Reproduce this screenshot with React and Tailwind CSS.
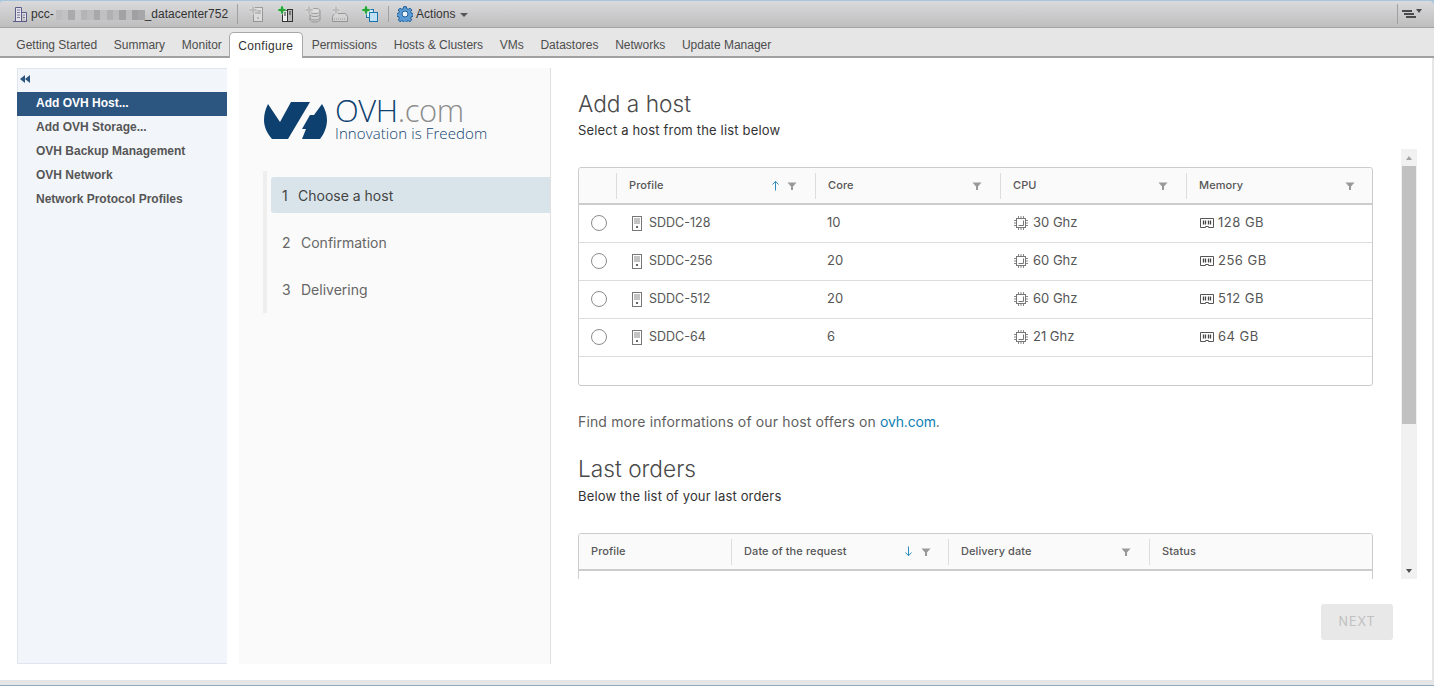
import React from 'react';

const tabs = ['Getting Started', 'Summary', 'Monitor', 'Configure', 'Permissions', 'Hosts & Clusters', 'VMs', 'Datastores', 'Networks', 'Update Manager'];
const sideItems = ['Add OVH Storage...', 'OVH Backup Management', 'OVH Network', 'Network Protocol Profiles'];
const hosts = [
    { name: 'SDDC-128', core: '10', cpu: '30 Ghz', mem: '128 GB' },
    { name: 'SDDC-256', core: '20', cpu: '60 Ghz', mem: '256 GB' },
    { name: 'SDDC-512', core: '20', cpu: '60 Ghz', mem: '512 GB' },
    { name: 'SDDC-64', core: '6', cpu: '21 Ghz', mem: '64 GB' },
];
const blurs = ['bg-[#bdbdbf]', 'bg-[#c2c2c4]', 'bg-[#aaaaac]', 'bg-[#c6c6c8]', 'bg-[#b4b4b6]', 'bg-[#bcbcbe]', 'bg-[#a8a8aa]', 'bg-[#c0c0c2]', 'bg-[#b0b0b2]', 'bg-[#bcbcbe]', 'bg-[#a2a2a4]', 'bg-[#bebec0]', 'bg-[#a0a0a2]', 'bg-[#a6a6a8]'];

const FilterIcon = () => (
    <svg width="10" height="10" viewBox="0 0 10 10" className="shrink-0">
        <path d="M0.5 1.5h9L6 5.5V9H4V5.500z" fill="#999" />
    </svg>
);

const SortArrow = ({ down }) => (
    <svg width="9" height="11" viewBox="0 0 9 11" className="shrink-0">
        <path d={down ? 'M4.5 0.5v9M1.5 6.5l3 3.2 3-3.2' : 'M4.5 10.5v-9M1.5 4.5l3-3.2 3 3.2'} fill="none" stroke="#2e8bc0" strokeWidth="1" />
    </svg>
);

const ServerIcon = () => (
    <svg width="10" height="15" viewBox="0 0 10 15" className="shrink-0">
        <rect x="0.5" y="0.5" width="9" height="14" fill="#fff" stroke="#777" />
        <path d="M2 3h6M2 5h6M2 7h6" stroke="#888" />
        <rect x="4" y="10" width="2" height="2" fill="#666" />
    </svg>
);

const CpuIcon = () => (
    <svg width="14" height="14" viewBox="0 0 14 14" className="shrink-0">
        <rect x="2.5" y="2.5" width="9" height="9" fill="none" stroke="#777" />
        <path d="M9.5 4.5v5h-5" fill="none" stroke="#777" />
        <path d="M0 4.5h2M0 7h2M0 9.5h2M12 4.5h2M12 7h2M12 9.5h2M4.5 0v2M7 0v2M9.5 0v2M4.5 12v2M7 12v2M9.500 12v2" stroke="#888" />
    </svg>
);

const MemIcon = () => (
    <svg width="14" height="11" viewBox="0 0 14 11" className="shrink-0">
        <path d="M0.5 0.5h13v9h-5v-1h-3v1h-5z" fill="none" stroke="#555" />
        <path d="M3.5 2.500v4M5.5 2.500v4M8.5 2.500v4M10.5 2.500v4" stroke="#444" strokeWidth="1.3" />
    </svg>
);

const Plus = ({ x = 0, y = 0, color = '#27a338' }) => (
    <path d={`M${x + 2.5} ${y}h3v2.5h2.5v3h-2.5v2.5h-3v-2.5h-2.5v-3h2.5z`} fill={color} stroke="#fff" strokeWidth="0.5" />
);

const ToolbarIcons = () => (
    <div className="flex items-center">
        <svg width="16" height="17" viewBox="0 0 16 17" className="ml-[11px] opacity-50">
            <rect x="4.5" y="1.5" width="9" height="14" fill="#eee" stroke="#666" />
            <path d="M6 5h6M6 7h6M8 12h2" stroke="#666" />
            <Plus color="#aaa" />
        </svg>
        <svg width="16" height="17" viewBox="0 0 16 17" className="ml-[13px]">
            <rect x="9.5" y="3.5" width="5" height="12" fill="#bbb" stroke="#333" />
            <rect x="4.5" y="4.5" width="5" height="11" fill="#eee" stroke="#333" />
            <path d="M6 7h2M6 9h2M11 6h2M11 8h2" stroke="#333" />
            <Plus />
        </svg>
        <svg width="16" height="17" viewBox="0 0 16 17" className="ml-[11px] opacity-50">
            <path d="M5 5v9c0 1 2 2 5 2s5-1 5-2V5z" fill="#ddd" stroke="#666" />
            <ellipse cx="10" cy="5" rx="5" ry="2.500" fill="#eee" stroke="#666" />
            <path d="M5 8.5c0 1 2 2 5 2s5-1 5-2M5 12c0 1 2 2 5 2s5-1 5-2" fill="none" stroke="#666" />
            <Plus color="#aaa" />
        </svg>
        <svg width="16" height="17" viewBox="0 0 16 17" className="ml-[11px] opacity-50">
            <path d="M0.5 10.5l2-3h11l2 3v5h-15z" fill="#ddd" stroke="#666" />
            <path d="M2 13h12" stroke="#666" strokeDasharray="1 1" />
            <Plus color="#aaa" />
        </svg>
        <svg width="16" height="17" viewBox="0 0 16 17" className="ml-[14px]">
            <rect x="4.5" y="3.5" width="7" height="8" fill="#d6ebf8" stroke="#1b75ad" />
            <rect x="7.5" y="6.5" width="8" height="9" fill="#bfe0f5" stroke="#1b75ad" />
            <Plus />
        </svg>
    </div>
);

const GearIcon = () => (
    <svg width="16" height="16" viewBox="0 0 24 24" className="shrink-0">
        <path d="M10 1h4l.6 3 2.2.9 2.6-1.7 2.8 2.8-1.7 2.6.9 2.2 3 .6v4l-3 .6-.9 2.2 1.7 2.6-2.8 2.8-2.6-1.7-2.2.9-.6 3h-4l-.6-3-2.2-.9-2.6 1.7-2.8-2.8 1.7-2.6-.9-2.2-3-.6v-4l3-.6.9-2.2-1.7-2.6 2.8-2.8 2.6 1.7 2.2-.9z" fill="#5b9bd5" stroke="#1d5c96" strokeWidth="1.5" />
        <circle cx="12" cy="12" r="4.5" fill="#eaf3fb" stroke="#1d5c96" strokeWidth="1.5" />
    </svg>
);

const OvhMark = () => (
    <svg width="63" height="37" viewBox="0 0 63 37" className="shrink-0">
        <path d="M4 2L16 20L27 0H46L24 37H8C3 31 0 25 0 18C0 12 1.500 7 4 2Z" fill="#0d3f6f" />
        <path d="M58 2C61 7 63 12 63 18C63 25 60 32 56 37H38L42 27H38L46 13H50Z" fill="#0d3f6f" />
    </svg>
);

const HeadCell = ({ label, children, first, tight }) => (
    <div className={`flex items-center h-[26px] pl-3 text-[11px] font-medium tracking-[0.1px] text-[#565656] ${tight ? 'pr-[17px]' : 'pr-[18px]'} ${first ? '' : 'border-l border-[#dddddd]'}`}>
        <span className="flex-1">{label}</span>
        {children}
    </div>
);

const App = () => {
    return (
        <div className="w-[1434px] h-[686px] overflow-hidden flex flex-col bg-[#a9c6df] font-['Liberation_Sans',sans-serif]">
            <div className="h-[27px] mt-px shrink-0 flex items-center rounded-tr-[5px] rounded-tl-[3px] border-b border-[#a3a3a3] bg-gradient-to-b from-[#dadadc] to-[#bebebf] text-[12px] text-[#333333]">
                <svg width="16" height="17" viewBox="0 0 16 17" className="ml-3 shrink-0">
                    <path d="M3.500 15.500V1.500h6v14M9.500 6.500h5v9M1 15.500h14" fill="#e2e2ea" stroke="#5c5c88" />
                    <path d="M5 4h3M5 6.500h3M5 9h3M5 11.500h3M11 9h2M11 11.500h2" stroke="#777799" />
                </svg>
                <span className="ml-[3px]">pcc-</span>
                <div className="flex items-center ml-[2px] w-[89px] h-[10px] mt-px blur-[0.7px]">
                    {blurs.map((c, i) => (
                        <div key={i} className={`h-[10px] flex-1 ${c}`} />
                    ))}
                </div>
                <span>_datacenter752</span>
                <div className="w-px h-[20px] bg-[#a0a0a0] ml-[9px]" />
                <ToolbarIcons />
                <div className="w-px h-[16px] bg-[#a0a0a0] ml-[10px]" />
                <div className="ml-[8px]"><GearIcon /></div>
                <span className="ml-[3px]">Actions</span>
                <span className="ml-[5px] mt-px w-0 h-0 border-x-4 border-t-4 border-x-transparent border-t-[#555555]" />
                <div className="ml-auto flex items-center mr-[12px]">
                    <div className="w-px h-[20px] bg-[#a0a0a0] mr-[4px]" />
                    <div className="flex flex-col gap-px w-[14px]">
                        <div className="h-[2px] w-[10px] bg-[#4a4a4a]" />
                        <div className="h-[2px] w-[10px] ml-[2px] bg-[#4a4a4a]" />
                        <div className="h-[2px] w-[10px] ml-[4px] bg-[#4a4a4a]" />
                    </div>
                    <span className="mb-[7px] w-0 h-0 border-x-[3.5px] border-t-4 border-x-transparent border-t-[#4a4a4a]" />
                </div>
            </div>

            <div className="h-[30px] shrink-0 flex items-end pl-2 bg-[#e6e6e6] border-b-2 border-[#a0a0a0] text-[12px] text-[#4d4d4d]">
                {tabs.map((t) => (
                    t === 'Configure' ? (
                        <div key={t} className="h-[26px] -mb-[2px] -ml-px pl-[8px] pr-[9px] flex items-center rounded-t-[5px] bg-white border border-b-0 border-[#a8a8a8] text-[#333333] tracking-[0.35px]">{t}</div>
                    ) : (
                        <div key={t} className="h-[22px] px-[8.35px] flex items-center">{t}</div>
                    )
                ))}
            </div>

            <div className="flex-1 flex min-h-0 bg-[#e6e6e6]">
                <div className="w-[1432px] h-[622px] flex bg-white pt-[10px] pl-[17px]">
                    <div className="w-[210px] h-[596px] shrink-0 bg-[#f2f5fa] border border-[#dfe6f0] border-r-0 text-[12px] font-bold text-[#565656]">
                        <div className="h-[23px] pl-px pt-[5px] flex">
                            <svg width="12" height="10" viewBox="0 0 12 10">
                                <path d="M6 1v8L1 5zM11 1v8L6 5z" fill="#2c5680" />
                            </svg>
                        </div>
                        <div className="-ml-px h-[24px] pl-[19px] pb-[2px] flex items-center bg-[#2c5680] text-[#ffffff]">Add OVH Host...</div>
                        {sideItems.map((s) => (
                            <div key={s} className="h-[24px] pl-[18px] pb-[2px] flex items-center">{s}</div>
                        ))}
                    </div>

                    <div className="w-[312px] h-[596px] ml-[12px] shrink-0 bg-[#fafafa] border-r border-[#e0e0e0]">
                        <div className="h-[103px] pl-[25px] pt-[34px] flex items-start">
                            <OvhMark />
                            <div className="ml-[8px] -mt-[7px] font-['Open_Sans',sans-serif] font-light">
                                <div className="text-[31px] leading-[31px] -mb-[1px] tracking-[-0.4px] text-[#0d3f6f]">OVH<span className="text-[#8c8c8c]">.com</span></div>
                                <div className="text-[15px] leading-[17px] tracking-[0.1px] text-[#0f4372]">Innovation is Freedom</div>
                            </div>
                        </div>
                        <div className="ml-[24px] pl-[4px] border-l-4 border-[#eeeeee] h-[142px] pt-[6px] font-['Inter',sans-serif] text-[14px] text-[#666666]">
                            <div className="h-[36px] flex items-center pl-[11px] rounded-l-[3px] bg-[#d9e4ea] text-[#444444]">
                                <span className="w-[16px]">1</span>Choose a host
                            </div>
                            <div className="h-[36px] mt-[11px] flex items-center pl-[11px]">
                                <span className="w-[19px]">2</span>Confirmation
                            </div>
                            <div className="h-[36px] mt-[11px] flex items-center pl-[11px]">
                                <span className="w-[19px]">3</span>Delivering
                            </div>
                        </div>
                    </div>

                    <div className="flex-1 min-w-0 pl-[27px] font-['Inter',sans-serif] text-[#565656] relative">
                        <div className="h-[81px] pt-[24px]">
                            <h1 className="text-[22.7px] leading-[24px] font-light text-[#4a4a4a]">Add a host</h1>
                            <p className="mt-[6px] text-[13px] leading-[16px] tracking-[0.17px] text-[#333333]">Select a host from the list below</p>
                        </div>
                        <div className="flex h-[430px]">
                            <div className="w-[795px] shrink-0 overflow-hidden pt-[18px]">
                                <div className="h-[219px] border border-[#cccccc] rounded-[3px]">
                                    <div className="h-[37px] border-b-2 border-[#cccccc] bg-[#fafafa] grid grid-cols-[37px_199px_185px_186px_1fr] items-center rounded-t-[3px]">
                                        <div />
                                        <HeadCell label="Profile">
                                            <SortArrow />
                                            <span className="w-[7px]" />
                                            <FilterIcon />
                                        </HeadCell>
                                        <HeadCell label="Core"><FilterIcon /></HeadCell>
                                        <HeadCell label="CPU"><FilterIcon /></HeadCell>
                                        <HeadCell label="Memory" tight><FilterIcon /></HeadCell>
                                    </div>
                                    {hosts.map((h) => (
                                        <div key={h.name} className="h-[38px] pb-px grid grid-cols-[38px_198px_185px_186px_1fr] items-center border-b border-[#dddddd] text-[13px]">
                                            <div className="flex justify-center pl-[2px]">
                                                <div className="w-4 h-4 rounded-full border border-[#8c8c8c] bg-white" />
                                            </div>
                                            <div className="flex items-center gap-[7px] pl-[15px]"><ServerIcon /><span className="text-[12.5px]">{h.name}</span></div>
                                            <div className="pl-3">{h.core}</div>
                                            <div className="flex items-center gap-[5px] pl-[14px]"><CpuIcon /><span>{h.cpu}</span></div>
                                            <div className="flex items-center gap-[4px] pl-[14px]"><MemIcon /><span className="tracking-[0.5px]">{h.mem}</span></div>
                                        </div>
                                    ))}
                                </div>
                                <p className="mt-[26px] text-[14px] leading-[20px] tracking-[0.14px] text-[#5f5f5f]">Find more informations of our host offers on <span className="tracking-[-0.2px] text-[#0f7fb5]">ovh.com</span>.</p>
                                <h2 className="mt-[23px] text-[22.7px] leading-[28px] font-light text-[#4a4a4a]">Last orders</h2>
                                <p className="mt-[5px] text-[13px] leading-[16px] tracking-[0.17px] text-[#333333]">Below the list of your last orders</p>
                                <div className="mt-[29px] border border-[#cccccc] rounded-[3px]">
                                    <div className="h-[37px] border-b-2 border-[#cccccc] bg-[#fafafa] grid grid-cols-[152px_217px_201px_1fr] items-center rounded-t-[3px]">
                                        <HeadCell label="Profile" first />
                                        <HeadCell label="Date of the request" tight>
                                            <SortArrow down />
                                            <span className="w-[8px]" />
                                            <FilterIcon />
                                        </HeadCell>
                                        <HeadCell label="Delivery date"><FilterIcon /></HeadCell>
                                        <HeadCell label="Status" />
                                    </div>
                                    <div className="h-[20px]" />
                                </div>
                            </div>
                            <div className="ml-[28px] w-[16px] h-[430px] shrink-0 flex flex-col items-center bg-[#f1f1f1]">
                                <div className="h-[17px] flex items-center justify-center">
                                    <span className="w-0 h-0 border-x-[3.5px] border-b-4 border-x-transparent border-b-[#a3a3a3]" />
                                </div>
                                <div className="h-[258px] w-[14px] bg-[#c1c1c1]" />
                                <div className="mt-auto h-[17px] flex items-center justify-center">
                                    <span className="w-0 h-0 border-x-[3.5px] border-t-4 border-x-transparent border-t-[#505050]" />
                                </div>
                            </div>
                        </div>
                        <div className="w-[815px] mt-[25px] flex justify-end">
                            <div className="w-[72px] h-[36px] flex items-center justify-center rounded-[3px] bg-[#e8e8e8] text-[12.5px] tracking-[1px] text-[#c0c0c0]">NEXT</div>
                        </div>
                    </div>
                </div>
            </div>
            <div className="h-px shrink-0 bg-[#8fa9bf]" />
        </div>
    );
};

export default App;
